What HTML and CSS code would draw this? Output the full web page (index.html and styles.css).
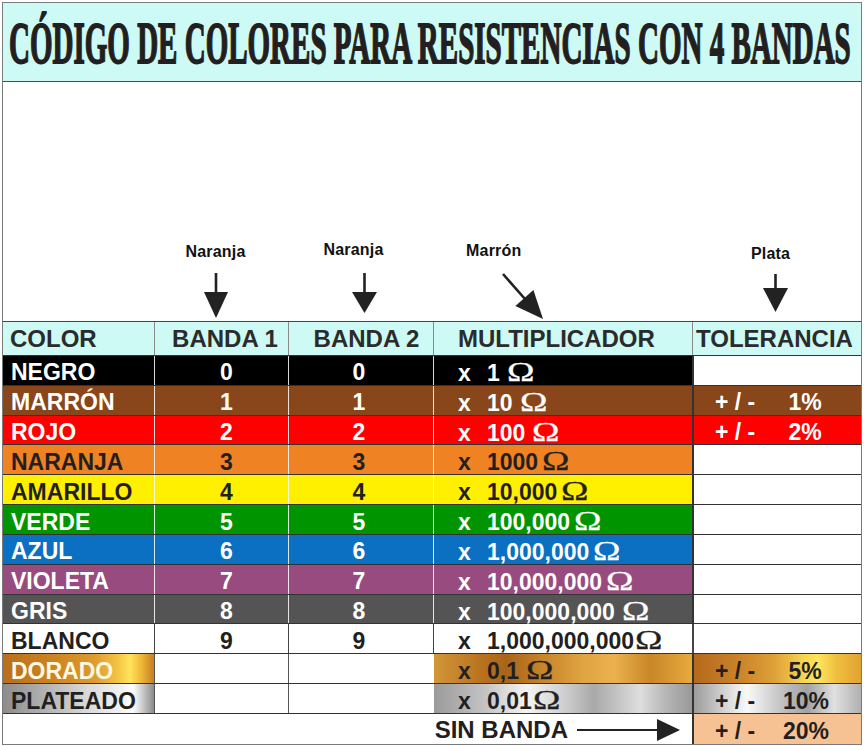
FILE: index.html
```html
<!DOCTYPE html>
<html lang="es">
<head>
<meta charset="utf-8">
<title>Código de colores para resistencias con 4 bandas</title>
<link rel="stylesheet" href="styles.css">
</head>
<body>
<div class="page">
  <div class="title"><span class="title-text">CÓDIGO DE COLORES PARA RESISTENCIAS CON 4 BANDAS</span></div>

  <div class="notes">
    <div class="note"></div>
    <div class="note n1">
      <span class="lbl">Naranja</span>
      <svg class="arw" width="24" height="45" viewBox="0 0 24 45"><line x1="12" y1="0" x2="12" y2="21" stroke="#222" stroke-width="2.6"/><polygon points="0,19 24,19 12,45" fill="#222"/></svg>
    </div>
    <div class="note n2">
      <span class="lbl">Naranja</span>
      <svg class="arw" width="25" height="40" viewBox="0 0 25 40"><line x1="12.5" y1="0" x2="12.5" y2="21" stroke="#222" stroke-width="2.6"/><polygon points="0,19 25,19 12.5,40" fill="#222"/></svg>
    </div>
    <div class="note n3">
      <span class="lbl">Marrón</span>
      <svg class="arw" width="46" height="48" viewBox="0 0 46 48"><line x1="3" y1="2" x2="25" y2="27" stroke="#222" stroke-width="2.6"/><polygon points="15.4,34 33.4,18 43,47" fill="#222"/></svg>
    </div>
    <div class="note n4">
      <span class="lbl">Plata</span>
      <svg class="arw" width="25" height="38" viewBox="0 0 25 38"><line x1="12.5" y1="0" x2="12.5" y2="16" stroke="#222" stroke-width="2.6"/><polygon points="0,14 25,14 12.5,38" fill="#222"/></svg>
    </div>
  </div>

  <div class="table">
    <div class="row head">
      <div class="h h-color">COLOR</div>
      <div class="h h-b1">BANDA 1</div>
      <div class="h h-b2">BANDA 2</div>
      <div class="h h-mult">MULTIPLICADOR</div>
      <div class="h h-tol">TOLERANCIA</div>
    </div>

    <div class="row dk negro">
      <div class="c k name">NEGRO</div><div class="c k d1">0</div><div class="c k d2">0</div>
      <div class="c k mult"><span class="mv"><span class="x">x</span><span class="num">1</span><span class="om">Ω</span></span></div>
      <div class="c tol"></div>
    </div>
    <div class="row dk marron">
      <div class="c k name">MARRÓN</div><div class="c k d1">1</div><div class="c k d2">1</div>
      <div class="c k mult"><span class="mv"><span class="x">x</span><span class="num">10</span><span class="om">Ω</span></span></div>
      <div class="c tol fill"><span class="pm">+ / -</span><span class="pct">1%</span></div>
    </div>
    <div class="row dk rojo">
      <div class="c k name">ROJO</div><div class="c k d1">2</div><div class="c k d2">2</div>
      <div class="c k mult"><span class="mv"><span class="x">x</span><span class="num">100</span><span class="om">Ω</span></span></div>
      <div class="c tol fill"><span class="pm">+ / -</span><span class="pct">2%</span></div>
    </div>
    <div class="row lt naranja">
      <div class="c k name">NARANJA</div><div class="c k d1">3</div><div class="c k d2">3</div>
      <div class="c k mult"><span class="mv"><span class="x">x</span><span class="num">1000</span><span class="om tight">Ω</span></span></div>
      <div class="c tol"></div>
    </div>
    <div class="row lt amarillo">
      <div class="c k name">AMARILLO</div><div class="c k d1">4</div><div class="c k d2">4</div>
      <div class="c k mult"><span class="mv"><span class="x">x</span><span class="num">10,000</span><span class="om tight">Ω</span></span></div>
      <div class="c tol"></div>
    </div>
    <div class="row dk verde">
      <div class="c k name">VERDE</div><div class="c k d1">5</div><div class="c k d2">5</div>
      <div class="c k mult"><span class="mv"><span class="x">x</span><span class="num">100,000</span><span class="om tight">Ω</span></span></div>
      <div class="c tol"></div>
    </div>
    <div class="row dk azul">
      <div class="c k name">AZUL</div><div class="c k d1">6</div><div class="c k d2">6</div>
      <div class="c k mult"><span class="mv"><span class="x">x</span><span class="num">1,000,000</span><span class="om tight">Ω</span></span></div>
      <div class="c tol"></div>
    </div>
    <div class="row dk violeta">
      <div class="c k name">VIOLETA</div><div class="c k d1">7</div><div class="c k d2">7</div>
      <div class="c k mult"><span class="mv"><span class="x">x</span><span class="num">10,000,000</span><span class="om tight">Ω</span></span></div>
      <div class="c tol"></div>
    </div>
    <div class="row dk gris">
      <div class="c k name">GRIS</div><div class="c k d1">8</div><div class="c k d2">8</div>
      <div class="c k mult"><span class="mv"><span class="x">x</span><span class="num">100,000,000</span><span class="om">Ω</span></span></div>
      <div class="c tol"></div>
    </div>
    <div class="row lt blanco">
      <div class="c k name">BLANCO</div><div class="c k d1">9</div><div class="c k d2">9</div>
      <div class="c k mult"><span class="mv"><span class="x">x</span><span class="num">1,000,000,000</span><span class="om none">Ω</span></span></div>
      <div class="c tol"></div>
    </div>
    <div class="row lt dorado">
      <div class="c name gold-name">DORADO</div><div class="c w d1"></div><div class="c w d2"></div>
      <div class="c mult gold-mult"><span class="mv"><span class="x">x</span><span class="num">0,1</span><span class="om">Ω</span></span></div>
      <div class="c tol gold-tol"><span class="pm">+ / -</span><span class="pct">5%</span></div>
    </div>
    <div class="row lt plateado">
      <div class="c name silver-name">PLATEADO</div><div class="c w d1"></div><div class="c w d2"></div>
      <div class="c mult silver-mult"><span class="mv"><span class="x">x</span><span class="num">0,01</span><span class="om none">Ω</span></span></div>
      <div class="c tol silver-tol"><span class="pm">+ / -</span><span class="pct">10%</span></div>
    </div>
    <div class="row lt last">
      <div class="c sin">
        <span class="sin-text">SIN BANDA</span>
        <svg width="103" height="24" viewBox="0 0 103 24"><line x1="0" y1="12" x2="82" y2="12" stroke="#222" stroke-width="2"/><polygon points="80,1 103,12 80,23" fill="#222"/></svg>
      </div>
      <div class="c tol peach"><span class="pm">+ / -</span><span class="pct">20%</span></div>
    </div>
  </div>
</div>
</body>
</html>
```

FILE: styles.css
```css
* { box-sizing: border-box; }

html, body {
  margin: 0;
  padding: 0;
  background: #ffffff;
}

body {
  font-family: "Liberation Sans", Arial, sans-serif;
  color: #231f20;
}

.page {
  margin: 2px 2px 0;
  width: 860px;
  border: 1px solid #7a7a7a;
}

/* ---------- title ---------- */
.title {
  height: 79px;
  background: #cdfaf4;
  border-bottom: 1px solid #4a4a4a;
  overflow: hidden;
  display: flex;
  align-items: flex-start;
  padding-left: 6px;
  white-space: nowrap;
}

.title-text {
  flex-shrink: 0;
  display: inline-block;
  margin-top: 10px;
  font-family: "Liberation Serif", "Times New Roman", serif;
  font-weight: bold;
  font-size: 60px;
  line-height: 60px;
  color: #231f20;
  -webkit-text-stroke: 1.8px #231f20;
  transform: scaleX(0.4835);
  transform-origin: 0 0;
}

/* ---------- annotations ---------- */
.notes {
  height: 239px;
  display: grid;
  grid-template-columns: 151px 134px 145px 259px 169px;
  align-items: end;
}

.note {
  display: flex;
  flex-direction: column;
  align-items: center;
}

.lbl {
  font-size: 16px;
  line-height: 18px;
  font-weight: bold;
  color: #111;
  letter-spacing: 0.2px;
}

.arw { display: block; }

.n1 { padding-right: 11px; }
.n1 .arw { margin-top: 12px; margin-bottom: 3px; }

.n2 .lbl { margin-right: 14px; }
.n2 .arw { margin-top: 14px; margin-bottom: 8px; margin-left: 7px; }

.n3 { align-items: flex-start; }
.n3 .lbl { margin-left: 33px; }
.n3 .arw { margin-left: 67px; margin-top: 12px; margin-bottom: 1px; }

.n4 .lbl { margin-right: 12px; }
.n4 .arw { margin-top: 11px; margin-bottom: 9px; margin-right: 3px; }

/* ---------- table ---------- */
.row {
  display: grid;
  grid-template-columns: 151px 134px 145px 259px 169px;
  grid-template-rows: minmax(0, 1fr);
  height: 29.83px;
  border-bottom: 1px solid #333;
}

.row.head {
  height: 35px;
  border-top: 1px solid #444;
  border-bottom: 1px solid #333;
}

.h {
  display: flex;
  align-items: center;
  background: #cdfaf4;
  font-size: 24px;
  line-height: 26px;
  font-weight: bold;
  color: #2b2b2b;
  border-left: 1px solid #8a8a8a;
  white-space: nowrap;
  padding-top: 1px;
}
.h-color { border-left: 0; padding-left: 7px; }
.h-b1 { justify-content: center; padding-left: 7px; }
.h-b2 { justify-content: center; padding-left: 11px; }
.h-mult { padding-left: 24px; }
.h-tol { padding-left: 3px; border-left: 1px solid #8a8a8a; }

.c {
  display: flex;
  align-items: center;
  font-size: 23px;
  line-height: 22px;
  font-weight: bold;
  white-space: nowrap;
  border-left: 1px solid rgba(255, 255, 255, 0.85);
  padding-top: 4px;
  min-height: 0;
}

.dk { color: #ffffff; }
.lt { color: #231f20; }

.k { background: var(--bg); }

.negro    { --bg: #000000; }
.marron   { --bg: #89461a; }
.rojo     { --bg: #ff0000; }
.naranja  { --bg: #ef8223; }
.amarillo { --bg: #fff000; }
.verde    { --bg: #009400; }
.azul     { --bg: #0b6fc2; }
.violeta  { --bg: #984b7e; }
.gris     { --bg: #545454; }
.blanco   { --bg: #ffffff; }

.blanco .c { border-left-color: #444; }
.c.w { background: #ffffff; border-left-color: #555; }

.name { border-left: 0; padding-left: 8px; }
.d1 { justify-content: center; padding-left: 10px; }
.d2 { justify-content: center; padding-right: 4px; }
.mult { padding-left: 24px; }

.mv { display: inline-block; line-height: 22px; }
.x { display: inline-block; width: 29px; }
.num { display: inline-block; }
.om {
  display: inline-block;
  margin-left: 7px;
  font-family: "Liberation Serif", "Times New Roman", serif;
  font-weight: normal;
  font-size: 28px;
  line-height: 22px;
  -webkit-text-stroke: 0.3px currentColor;
  transform: scaleX(1.32);
  transform-origin: 0 100%;
}
.om.tight { margin-left: 4px; }
.om.none { margin-left: 1px; }

.tol {
  background: #ffffff;
  border-left: 2px solid #333;
  padding-left: 21px;
}
.tol.fill { background: var(--bg); }

.pm { display: inline-block; width: 68px; }
.pct { display: inline-block; width: 44px; text-align: center; }

/* metallic rows */
.dorado .name { color: #fff8e2; }

.gold-name {
  background: linear-gradient(90deg, #b86f1a 0%, #cd8524 35%, #dc9a30 60%, #f3c443 76%, #ffe45a 84%, #f0bb3a 91%, #c77e20 100%);
}
.gold-mult {
  background: linear-gradient(90deg, #d29638 0%, #b9731f 18%, #a9641a 28%, #c78428 42%, #e0a443 58%, #eab24e 70%, #c98628 84%, #e7ab3d 100%);
  border-left-color: #ffffff;
}
.gold-tol {
  background: linear-gradient(90deg, #b56a1b 0%, #c98029 25%, #dea038 48%, #f8d64f 66%, #ffe55c 74%, #efbd3e 86%, #e2a232 100%);
}

.silver-name {
  background: linear-gradient(90deg, #8c8c8c 0%, #b5b5b5 30%, #d8d8d8 55%, #f4f4f4 80%, #ffffff 86%, #bdbdbd 94%, #8a8a8a 100%);
}
.silver-mult {
  background: linear-gradient(90deg, #9a9a9a 0%, #c4c4c4 20%, #f4f4f4 36%, #d0d0d0 50%, #a9a9a9 62%, #dedede 80%, #b5b5b5 90%, #999999 100%);
  border-left-color: #ffffff;
}
.silver-tol {
  background: linear-gradient(90deg, #9c9c9c 0%, #e8e8e8 25%, #f8f8f8 32%, #bcbcbc 55%, #a3a3a3 68%, #e0e0e0 84%, #b0b0b0 100%);
}

/* last row */
.row.last {
  height: 30px;
  border-bottom: 0;
  grid-template-columns: 689px 169px;
}

.sin {
  border-left: 0;
  justify-content: flex-end;
  padding-right: 12px;
  gap: 9px;
  background: #ffffff;
  padding-top: 2px;
}

.sin-text { font-size: 24px; }
.sin svg { display: block; }

.tol.peach { background: #f7c293; }
```
